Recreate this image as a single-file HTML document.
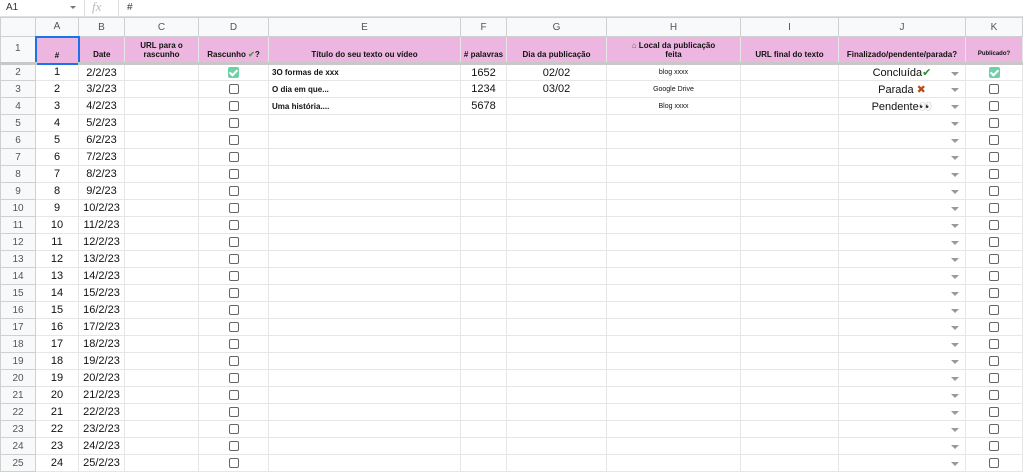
<!DOCTYPE html><html><head><meta charset="utf-8"><style>
*{box-sizing:border-box;margin:0;padding:0}
body{width:1023px;height:475px;overflow:hidden;background:#fff;font-family:"Liberation Sans",sans-serif;font-size:11px;color:#000;position:relative}
.top{position:absolute;left:0;top:0;width:1023px;height:17px;border-bottom:1px solid #e0e0e0;font-size:10px;color:#333}
table{position:absolute;left:0;top:17px;border-collapse:collapse;table-layout:fixed}
td{border:1px solid #e6e6e6;padding:0;text-align:center;vertical-align:middle;white-space:nowrap;overflow:hidden;height:17px;font-size:11px;position:relative;color:#111}
tr.ch td{height:19px;background:#f8f9fa;color:#555;font-size:10px;border-color:#d0d0d0}
td.rh{background:#f8f9fa;color:#555;font-size:10px;border-color:#d0d0d0}
tr.r1 td{height:27px;background:#edb6e0;font-size:8px;font-weight:bold;vertical-align:bottom;padding-bottom:3px;white-space:normal;line-height:9px;border-bottom:3px solid #c8c8c8}
tr.r1 td.rh{background:#f8f9fa;color:#555;font-size:10px;font-weight:normal;vertical-align:middle}
.cb{display:inline-block;width:10px;height:10px;border:1.5px solid #666;border-radius:2px;vertical-align:middle}
.cbc{display:inline-block;width:11px;height:11px;background:#6fd0a8;border-radius:2px;vertical-align:middle;position:relative}
.cbc:after{content:"";position:absolute;left:3px;top:1px;width:3px;height:6px;border:solid #fff;border-width:0 2px 2px 0;transform:rotate(45deg)}
.dd{position:absolute;right:6px;top:7px;width:0;height:0;border-left:4px solid transparent;border-right:4px solid transparent;border-top:4px solid #999}
.l{text-align:left;padding-left:3px;font-size:8px;font-weight:bold}
.s{font-size:7px}
</style></head><body>
<div class="top"><span style="position:absolute;left:6px;top:2px">A1</span><span style="position:absolute;left:70px;top:6px;border-left:3px solid transparent;border-right:3px solid transparent;border-top:3px solid #777"></span><span style="position:absolute;left:84px;top:0;height:16px;border-left:1px solid #ddd"></span><span style="position:absolute;left:92px;top:-1px;font-family:'Liberation Serif',serif;font-style:italic;color:#bbb;font-size:13px">fx</span><span style="position:absolute;left:118px;top:0;height:16px;border-left:1px solid #ddd"></span><span style="position:absolute;left:127px;top:2px">#</span></div>
<table>
<colgroup><col style="width:35px"><col style="width:43px"><col style="width:46px"><col style="width:74px"><col style="width:70px"><col style="width:192px"><col style="width:46px"><col style="width:100px"><col style="width:134px"><col style="width:98px"><col style="width:127px"><col style="width:57px"></colgroup>
<tr class="ch"><td></td><td>A</td><td>B</td><td>C</td><td>D</td><td>E</td><td>F</td><td>G</td><td>H</td><td>I</td><td>J</td><td>K</td></tr>
<tr class="r1"><td class="rh">1</td><td style="border:2px solid #1a73e8">#</td><td>Date</td><td>URL para o<br>rascunho</td><td>Rascunho <span style="color:#4a9a3a">✔</span>?</td><td>Título do seu texto ou vídeo</td><td>#&nbsp;palavras</td><td>Dia da publicação</td><td><span style="color:#3a7a3a">⌂</span> Local da publicação<br>feita</td><td>URL final do texto</td><td>Finalizado/pendente/parada?</td><td style="font-size:6px">Publicado?</td></tr>
<tr><td class="rh">2</td><td>1</td><td>2/2/23</td><td></td><td><span class="cbc"></span></td><td class="l">3O formas de xxx</td><td>1652</td><td>02/02</td><td class="s">blog xxxx</td><td></td><td>Concluída<span style="color:#2e8b2e">✔</span><span class="dd"></span></td><td><span class="cbc"></span></td></tr>
<tr><td class="rh">3</td><td>2</td><td>3/2/23</td><td></td><td><span class="cb"></span></td><td class="l">O dia em que...</td><td>1234</td><td>03/02</td><td class="s">Google Drive</td><td></td><td>Parada <span style="color:#b5501e">✖</span><span class="dd"></span></td><td><span class="cb"></span></td></tr>
<tr><td class="rh">4</td><td>3</td><td>4/2/23</td><td></td><td><span class="cb"></span></td><td class="l">Uma história....</td><td>5678</td><td></td><td class="s">Blog xxxx</td><td></td><td>Pendente👀<span class="dd"></span></td><td><span class="cb"></span></td></tr>
<tr><td class="rh">5</td><td>4</td><td>5/2/23</td><td></td><td><span class="cb"></span></td><td></td><td></td><td></td><td></td><td></td><td><span class="dd"></span></td><td><span class="cb"></span></td></tr>
<tr><td class="rh">6</td><td>5</td><td>6/2/23</td><td></td><td><span class="cb"></span></td><td></td><td></td><td></td><td></td><td></td><td><span class="dd"></span></td><td><span class="cb"></span></td></tr>
<tr><td class="rh">7</td><td>6</td><td>7/2/23</td><td></td><td><span class="cb"></span></td><td></td><td></td><td></td><td></td><td></td><td><span class="dd"></span></td><td><span class="cb"></span></td></tr>
<tr><td class="rh">8</td><td>7</td><td>8/2/23</td><td></td><td><span class="cb"></span></td><td></td><td></td><td></td><td></td><td></td><td><span class="dd"></span></td><td><span class="cb"></span></td></tr>
<tr><td class="rh">9</td><td>8</td><td>9/2/23</td><td></td><td><span class="cb"></span></td><td></td><td></td><td></td><td></td><td></td><td><span class="dd"></span></td><td><span class="cb"></span></td></tr>
<tr><td class="rh">10</td><td>9</td><td>10/2/23</td><td></td><td><span class="cb"></span></td><td></td><td></td><td></td><td></td><td></td><td><span class="dd"></span></td><td><span class="cb"></span></td></tr>
<tr><td class="rh">11</td><td>10</td><td>11/2/23</td><td></td><td><span class="cb"></span></td><td></td><td></td><td></td><td></td><td></td><td><span class="dd"></span></td><td><span class="cb"></span></td></tr>
<tr><td class="rh">12</td><td>11</td><td>12/2/23</td><td></td><td><span class="cb"></span></td><td></td><td></td><td></td><td></td><td></td><td><span class="dd"></span></td><td><span class="cb"></span></td></tr>
<tr><td class="rh">13</td><td>12</td><td>13/2/23</td><td></td><td><span class="cb"></span></td><td></td><td></td><td></td><td></td><td></td><td><span class="dd"></span></td><td><span class="cb"></span></td></tr>
<tr><td class="rh">14</td><td>13</td><td>14/2/23</td><td></td><td><span class="cb"></span></td><td></td><td></td><td></td><td></td><td></td><td><span class="dd"></span></td><td><span class="cb"></span></td></tr>
<tr><td class="rh">15</td><td>14</td><td>15/2/23</td><td></td><td><span class="cb"></span></td><td></td><td></td><td></td><td></td><td></td><td><span class="dd"></span></td><td><span class="cb"></span></td></tr>
<tr><td class="rh">16</td><td>15</td><td>16/2/23</td><td></td><td><span class="cb"></span></td><td></td><td></td><td></td><td></td><td></td><td><span class="dd"></span></td><td><span class="cb"></span></td></tr>
<tr><td class="rh">17</td><td>16</td><td>17/2/23</td><td></td><td><span class="cb"></span></td><td></td><td></td><td></td><td></td><td></td><td><span class="dd"></span></td><td><span class="cb"></span></td></tr>
<tr><td class="rh">18</td><td>17</td><td>18/2/23</td><td></td><td><span class="cb"></span></td><td></td><td></td><td></td><td></td><td></td><td><span class="dd"></span></td><td><span class="cb"></span></td></tr>
<tr><td class="rh">19</td><td>18</td><td>19/2/23</td><td></td><td><span class="cb"></span></td><td></td><td></td><td></td><td></td><td></td><td><span class="dd"></span></td><td><span class="cb"></span></td></tr>
<tr><td class="rh">20</td><td>19</td><td>20/2/23</td><td></td><td><span class="cb"></span></td><td></td><td></td><td></td><td></td><td></td><td><span class="dd"></span></td><td><span class="cb"></span></td></tr>
<tr><td class="rh">21</td><td>20</td><td>21/2/23</td><td></td><td><span class="cb"></span></td><td></td><td></td><td></td><td></td><td></td><td><span class="dd"></span></td><td><span class="cb"></span></td></tr>
<tr><td class="rh">22</td><td>21</td><td>22/2/23</td><td></td><td><span class="cb"></span></td><td></td><td></td><td></td><td></td><td></td><td><span class="dd"></span></td><td><span class="cb"></span></td></tr>
<tr><td class="rh">23</td><td>22</td><td>23/2/23</td><td></td><td><span class="cb"></span></td><td></td><td></td><td></td><td></td><td></td><td><span class="dd"></span></td><td><span class="cb"></span></td></tr>
<tr><td class="rh">24</td><td>23</td><td>24/2/23</td><td></td><td><span class="cb"></span></td><td></td><td></td><td></td><td></td><td></td><td><span class="dd"></span></td><td><span class="cb"></span></td></tr>
<tr><td class="rh">25</td><td>24</td><td>25/2/23</td><td></td><td><span class="cb"></span></td><td></td><td></td><td></td><td></td><td></td><td><span class="dd"></span></td><td><span class="cb"></span></td></tr>
</table>
</body></html>
